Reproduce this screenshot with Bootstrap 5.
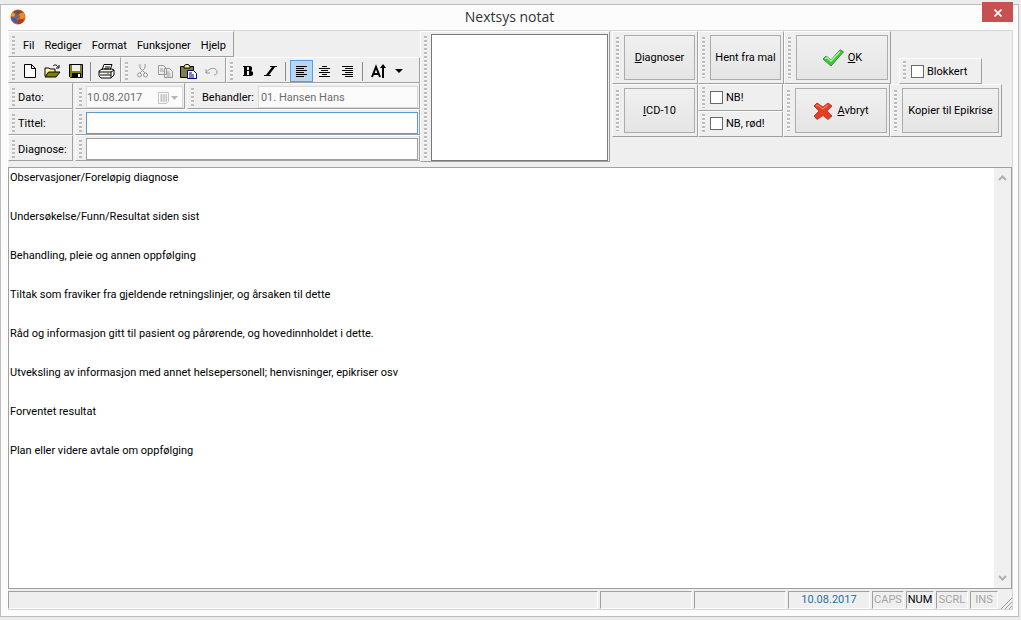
<!DOCTYPE html>
<html lang="no">
<head>
<meta charset="utf-8">
<meta name="viewport" content="width=device-width, initial-scale=1">
<title>Nextsys notat</title>
<link href="https://cdn.jsdelivr.net/npm/bootstrap@5.3.0/dist/css/bootstrap.min.css" rel="stylesheet">
<style>
  :root { --face: #efefef; --shade: #a0a0a0; --light: #fcfcfc; }
  body { background: #ececec; color: #000; font-family: Roboto, "DejaVu Sans Condensed", sans-serif; font-size: 11px; line-height: 13px; padding: 4px 2px 3px 0; }
  .app-window { background: #fcfcfc; border: 1px solid #bdbdbd; padding: 0 5px 6px 7px; }
  .title-bar { height: 25px; padding: 0 0 2px 2px; }
  .title-bar h1 { font-family: "Open Sans", sans-serif; font-size: 14px; line-height: 20px; color: #333; padding-right: 20px; }
  .close-btn { position: absolute; top: -3px; right: 0; width: 31px; height: 20px; background: #c75050; }
  .client { background: var(--face); border: 1px solid #d5d5d5; border-width: 1px 1px 1px 0; }
  .tool-area { padding-bottom: 5px; }
  .band { min-height: 26px; border: 1px solid var(--shade); border-top-color: var(--light); border-left-color: var(--light); padding: 0 2px 0 3px; background: var(--face); }
  .band.tall { min-height: 53px; padding-bottom: 3px; padding-top: 3px; }
  .left-bands { width: 412px; }
  .left-bands .band { padding-top: 2px; }
  .left-bands .split .band, .memo-band { padding-right: 1px; }
  .split { gap: 2px; }
  .grip { flex: none; align-self: stretch; width: 3px; margin: 2px 4px 2px 0; background: repeating-linear-gradient(#bcbcbc 0 2px, #fafafa 2px 3px, transparent 3px 4px); }
  .tools .grip, .caption-band .grip { margin-right: 3px; }
  .action-bands { margin-left: 2px; }
  .action-bands .grip { margin-right: 5px; }
  .caption-band { width: 65px; }
  .date-band { width: 110px; }
  .menu-row { gap: 10px; padding: 0 5px 0 4px; }
  .menu-row a { color: #000; text-decoration: none; }
  .tool { width: 23px; height: 22px; padding: 0; border: 1px solid transparent; background: none; display: flex; align-items: center; justify-content: center; }
  .tool.active { background: #b5d7f3; border-color: #5e9fdb; }
  .divider { width: 1px; height: 19px; margin: 0 4px 0 3px; background: #8a8a8a; }
  .field { border: 1px solid var(--shade); border-radius: 0; background: #fff; height: 22px; min-width: 0; padding: 0 2px; color: #000; font-size: 11px; line-height: 13px; }
  .field:disabled { color: #6d6d6d; background: #fbfbfb; border-color: #d9d9d9; }
  #dato { padding-left: 0; }
  .field.current { border-color: #5b9bd0; outline: none; }
  .memo-band { width: 190px; min-height: 131px; padding-top: 2px; }
  .memo { border: 1px solid #7a7a7a; border-radius: 0; resize: none; background: #fff; }
  .push { border: 1px solid #acacac; background: linear-gradient(#f0f0f0, #e5e5e5); color: #000; border-radius: 0; padding: 0; font-size: 11px; line-height: 13px; white-space: nowrap; }
  .w-band { width: 86px; }
  .w-check { width: 85px; }
  .w-action { width: 107px; }
  .w-copy { width: 112px; }
  .w-block { width: 83px; }
  .tick-label { gap: 3px; }
  .tick { appearance: none; width: 13px; height: 13px; border: 1px solid #6a6a6a; background: #fff; margin: 0; flex: none; }
  .editor { border: 1px solid var(--shade); background: #fff; }
  .editor textarea { border: 0; resize: none; padding: 3px 1px; outline: none; overflow: hidden; font-size: 11px; line-height: 13px; color: #000; }
  .scroll-rail { width: 17px; background: #f0f0f0; }
  .scroll-rail button { border: 0; background: none; padding: 0; height: 20px; line-height: 0; }
  .status { padding-top: 2px; height: 20px; gap: 2px; }
  .cell { border: 1px solid var(--shade); border-right-color: #fff; border-bottom-color: #fff; height: 18px; line-height: 16px; text-align: center; }
  .cell-info { width: 92px; }
  .cell-date { width: 82px; color: #1f6f9f; }
  .cell-key { width: 32px; }
  .cell-short { width: 28px; }
  .off { color: #a5a5a5; }
</style>
</head>
<body class="d-flex flex-column min-vh-100">
<main class="app-window d-flex flex-column flex-grow-1">
  <header class="title-bar position-relative d-flex align-items-center">
    <svg width="16" height="16" viewBox="0 0 16 16" aria-hidden="true"><circle cx="8" cy="8" r="7.5" fill="#d95b1f"/><path d="M3 3 8 1l5 2-3 3-4-1z" fill="#7d4a3c"/><path d="m10 4 4 0 1 5-4 1-3-3z" fill="#f08a24"/><path d="m1 8 4 1 3 3-2 2C3 13 1 11 1 8z" fill="#2861c4"/><path d="m8 11 4-1 2 1-4 4-3 0z" fill="#a83a1e"/><path d="m2 4 4 1 0 3-5-1z" fill="#e9a04a"/><path d="m5 5 4 0 1 3-3 2-3-2z" fill="#6f6a70"/></svg>
    <h1 class="flex-grow-1 text-center m-0 fw-normal">Nextsys notat</h1>
    <button class="close-btn border-0 p-0" aria-label="Lukk"><svg width="8" height="8" viewBox="0 0 8 8"><path d="m.5.5 7 7m0-7-7 7" stroke="#fff" stroke-width="1.6"/></svg></button>
  </header>

  <div class="client d-flex flex-column flex-grow-1">
    <div class="tool-area d-flex align-items-start">
      <div class="left-bands flex-shrink-0">
        <nav class="band d-inline-flex align-items-center align-top">
          <span class="grip"></span>
          <span class="menu-row d-flex"><a href="#">Fil</a><a href="#">Rediger</a><a href="#">Format</a><a href="#">Funksjoner</a><a href="#">Hjelp</a></span>
        </nav>
        <div class="tools d-flex">
          <div class="band d-flex align-items-center">
            <span class="grip"></span>
            <button class="tool" aria-label="Ny"><svg width="12" height="14" viewBox="0 0 12 14"><path d="M.5.5h7l4 4v9H.5zM7.500.5v4h4" fill="#fff" stroke="#000"/></svg></button>
            <button class="tool" aria-label="Åpne"><svg width="17" height="14" viewBox="0 0 17 14"><path d="M1 12V4h4l1 1h5v3" fill="#ffff9a" stroke="#000"/><path d="M1 13l3.500-5H16l-4 5z" fill="#808000" stroke="#000"/><path d="M9 2c2-2 4-1 5 1m1-2v3h-3" fill="none" stroke="#000"/></svg></button>
            <button class="tool" aria-label="Lagre"><svg width="14" height="14" viewBox="0 0 14 14"><path d="M.5.5h13v13h-12l-1-1z" fill="#808000" stroke="#000"/><path d="M3 1h8v6H3z" fill="#efefef"/><path d="M3 9h9v5H3z"/><path d="M9 10h2v3H9z" fill="#fff"/></svg></button>
            <span class="divider"></span>
            <button class="tool" aria-label="Skriv ut"><svg width="17" height="15" viewBox="0 0 17 15"><path d="M4 6 6 .5h8L12 6M1 7l3-2h10l2 1v5l-3 3H3l-2-2zM1 8h12l3-2M13 8v6M2 11h11" fill="#fff" stroke="#000"/><path d="M7 3h5M6 5h5" stroke="#000"/><path d="M9 9h2v1H9z" fill="#aa0"/></svg></button>
          </div>
          <div class="band d-flex align-items-center">
            <span class="grip"></span>
            <button class="tool" aria-label="Klipp ut"><svg width="11" height="14" viewBox="0 0 11 14" fill="none" stroke="#999"><path d="M3 0v4l5 5M8 0v4L3 9"/><circle cx="2.500" cy="11" r="2"/><circle cx="8.500" cy="11" r="2"/></svg></button>
            <button class="tool" aria-label="Kopier"><svg width="15" height="13" viewBox="0 0 15 13" fill="#efefef" stroke="#999"><path d="M.5.5h5l3 3v6h-8zM6.500 3.500h5l3 3v6h-8zM2 4h3M2 6h4M8.500 7h3M8.500 9h4M8.500 11h4"/></svg></button>
            <button class="tool" aria-label="Lim inn"><svg width="17" height="15" viewBox="0 0 17 15"><path d="M.5 2.500h13v11H.5z" fill="#808040" stroke="#000"/><path d="M4 4V2l2-1.500h2L10 2v2z" fill="#ff9" stroke="#000"/><path d="M7.500 6.500h6l3 3v5h-9z" fill="#fff" stroke="#000080"/><path d="M9 9h3M9 11h5M9 13h5" stroke="#000080"/></svg></button>
            <button class="tool" aria-label="Angre"><svg width="13" height="9" viewBox="0 0 13 9" fill="none" stroke="#999"><path d="M1 2v4h4M1 6c3-6 11-6 11-1 0 2-1 3-3 3"/></svg></button>
          </div>
          <div class="band d-flex align-items-center flex-grow-1">
            <span class="grip"></span>
            <button class="tool" aria-label="Fet"><svg width="10" height="10" viewBox="0 0 10 10"><path fill-rule="evenodd" d="M0 0h7l2 1v3L8 5l2 1v3L8 10H0V9h1V1H0zm4 1v3h2V1zm0 4v4h2V5z"/></svg></button>
            <button class="tool" aria-label="Kursiv"><svg width="13" height="10" viewBox="0 0 13 10"><path d="M6 0h7v1h-2L5 9h2v1H0V9h2l6-8H6z"/></svg></button>
            <span class="divider"></span>
            <button class="tool active" aria-label="Venstrejuster"><svg width="12" height="11" viewBox="0 0 12 11" stroke="#000"><path d="M0 .5h11M0 2.500h8M0 4.500h11M0 6.500h8M0 8.500h11M0 10.500h8"/></svg></button>
            <button class="tool" aria-label="Midtstill"><svg width="11" height="11" viewBox="0 0 11 11" stroke="#000"><path d="M3 .5h5M0 2.500h11M2 4.500h7M0 6.500h11M3 8.500h5M0 10.500h11"/></svg></button>
            <button class="tool" aria-label="Høyrejuster"><svg width="12" height="11" viewBox="0 0 12 11" stroke="#000"><path d="M0 .5h11M3 2.500h8M0 4.500h11M3 6.500h8M0 8.500h11M3 10.500h8"/></svg></button>
            <span class="divider"></span>
            <button class="tool" aria-label="Skriftstørrelse"><svg width="15" height="14" viewBox="0 0 15 14"><path d="M1 13 5 3l4 10M2.500 10h5" fill="none" stroke="#000" stroke-width="2"/><path d="M11 14V4H9l3-4 3 4h-2v10z"/></svg></button>
            <button class="tool w-auto px-1" aria-label="Flere størrelser"><svg width="8" height="4" viewBox="0 0 8 4"><path d="M0 0h8L4 4z"/></svg></button>
          </div>
        </div>
        <div class="split d-flex">
          <div class="band caption-band d-flex align-items-center"><span class="grip"></span><label for="dato">Dato:</label></div>
          <div class="band date-band d-flex align-items-center">
            <span class="grip"></span>
            <input id="dato" class="field flex-grow-1 border-end-0" size="1" value="10.08.2017" disabled>
            <button class="field border-start-0 pe-1" aria-label="Velg dato" disabled><svg width="20" height="12" viewBox="0 0 20 12"><path d="M.5.5h10v9l-2 2h-8zM2 3h7M2 5h7M2 7h7M2 9h7M3.500 2v8M6 2v8M8.500 2v8" fill="none" stroke="#c4c4c4"/><path d="M13 4h7l-3.500 4z" fill="#b5b5b5"/></svg></button>
          </div>
          <div class="band d-flex align-items-center flex-grow-1">
            <span class="grip"></span>
            <label for="behandler" class="px-1">Behandler:</label>
            <input id="behandler" class="field flex-grow-1" value="01. Hansen Hans" size="1" disabled>
          </div>
        </div>
        <div class="split d-flex">
          <div class="band caption-band d-flex align-items-center"><span class="grip"></span><label for="tittel">Tittel:</label></div>
          <div class="band d-flex align-items-center flex-grow-1"><span class="grip"></span><input id="tittel" class="field current flex-grow-1"></div>
        </div>
        <div class="split d-flex">
          <div class="band caption-band d-flex align-items-center"><span class="grip"></span><label for="diagnose">Diagnose:</label></div>
          <div class="band d-flex align-items-center flex-grow-1"><span class="grip"></span><input id="diagnose" class="field flex-grow-1"></div>
        </div>
      </div>

      <div class="band memo-band d-flex flex-shrink-0"><span class="grip"></span><textarea class="memo flex-grow-1" cols="1" aria-label="Diagnoseliste"></textarea></div>

      <div class="action-bands flex-shrink-0">
        <div class="d-flex align-items-end">
          <div class="band tall w-band d-flex"><span class="grip"></span><button class="push flex-grow-1"><u>D</u>iagnoser</button></div>
          <div class="band tall w-band d-flex"><span class="grip"></span><button class="push flex-grow-1">Hent fra mal</button></div>
          <div class="band tall w-action d-flex"><span class="grip"></span><button class="push flex-grow-1 d-flex align-items-center justify-content-center gap-1"><svg width="22" height="18" viewBox="0 0 22 18"><path d="M1 10 4 7l5 4L18 .8l3.500 2L9 17z" fill="#3cc83c" stroke="#3b8a3b"/><path d="m3 9.500 1.500-1L9 12l9-9.500" fill="none" stroke="#a9f0a0" stroke-width="1.500"/></svg><span><u>O</u>K</span></button></div>
          <div class="band w-block d-flex align-items-center ms-2"><span class="grip"></span><label class="tick-label d-flex align-items-center"><input type="checkbox" class="tick">Blokkert</label></div>
        </div>
        <div class="d-flex">
          <div class="band tall w-band d-flex"><span class="grip"></span><button class="push flex-grow-1"><u>I</u>CD-10</button></div>
          <div class="w-check d-flex flex-column">
            <div class="band d-flex align-items-center flex-grow-1"><span class="grip"></span><label class="tick-label d-flex align-items-center"><input type="checkbox" class="tick">NB!</label></div>
            <div class="band d-flex align-items-center flex-grow-1"><span class="grip"></span><label class="tick-label d-flex align-items-center"><input type="checkbox" class="tick">NB, rød!</label></div>
          </div>
          <div class="band tall w-action d-flex"><span class="grip"></span><button class="push flex-grow-1 d-flex align-items-center justify-content-center gap-1"><svg width="20" height="18" viewBox="0 0 20 18"><path d="m1 4 3-3 6 4 5-4 4 3-5 5 5 5-4 3.500-5-4-6 4L1 14l5-5z" fill="#ec3b20" stroke="#a34838"/><path d="m3 4 1.500-1L10 7l5-4" fill="none" stroke="#ff9a80"/></svg><span><u>A</u>vbryt</span></button></div>
          <div class="band tall w-copy d-flex"><span class="grip"></span><button class="push flex-grow-1">Kopier til Epikrise</button></div>
        </div>
      </div>
    </div>

    <div class="editor d-flex flex-grow-1">
      <textarea class="flex-grow-1" aria-label="Notat" spellcheck="false">Observasjoner/Foreløpig diagnose


Undersøkelse/Funn/Resultat siden sist


Behandling, pleie og annen oppfølging


Tiltak som fraviker fra gjeldende retningslinjer, og årsaken til dette


Råd og informasjon gitt til pasient og pårørende, og hovedinnholdet i dette.


Utveksling av informasjon med annet helsepersonell; henvisninger, epikriser osv


Forventet resultat


Plan eller videre avtale om oppfølging</textarea>
      <div class="scroll-rail d-flex flex-column justify-content-between">
        <button aria-label="Rull opp"><svg width="9" height="6" viewBox="0 0 9 6"><path d="m1 5 3.500-3.500L8 5" fill="none" stroke="#b0b0b0" stroke-width="2"/></svg></button>
        <button aria-label="Rull ned"><svg width="9" height="6" viewBox="0 0 9 6"><path d="m1 1 3.500 3.500L8 1" fill="none" stroke="#b0b0b0" stroke-width="2"/></svg></button>
      </div>
    </div>

    <footer class="status d-flex">
      <div class="cell flex-grow-1"></div>
      <div class="cell cell-info"></div>
      <div class="cell cell-info"></div>
      <div class="cell cell-date">10.08.2017</div>
      <div class="cell cell-key off">CAPS</div>
      <div class="cell cell-short">NUM</div>
      <div class="cell cell-key off">SCRL</div>
      <div class="cell cell-short off">INS</div>
      <svg width="12" height="12" viewBox="0 0 12 12" class="align-self-end" stroke="#999"><path d="M1 12 12 1M5 12l7-7M9 12l3-3"/></svg>
    </footer>
  </div>
</main>
<script src="https://cdn.jsdelivr.net/npm/bootstrap@5.3.0/dist/js/bootstrap.bundle.min.js"></script>
</body>
</html>
